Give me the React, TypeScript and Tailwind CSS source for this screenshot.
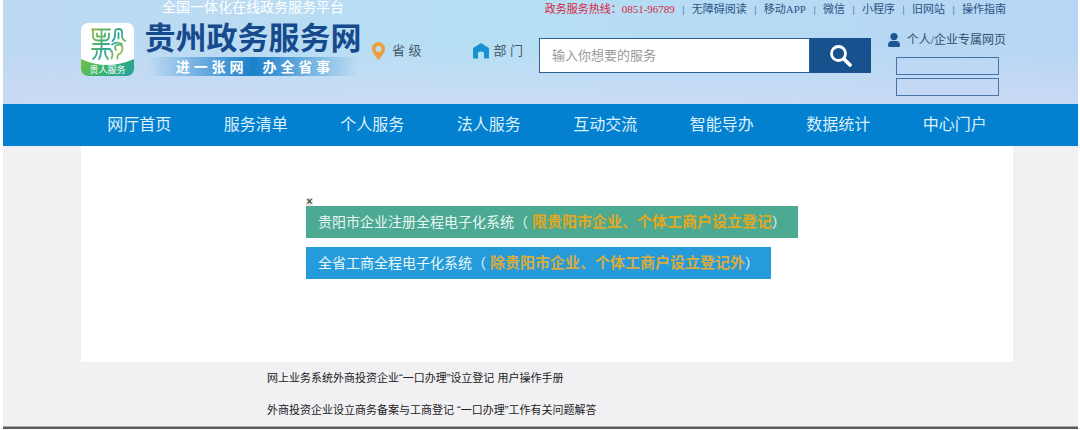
import React from 'react';

const topLinks = ['无障碍阅读', '移动APP', '微信', '小程序', '旧网站', '操作指南'];

const navItems = [
  '网厅首页',
  '服务清单',
  '个人服务',
  '法人服务',
  '互动交流',
  '智能导办',
  '数据统计',
  '中心门户',
];

const guides = [
  '网上业务系统外商投资企业“一口办理”设立登记 用户操作手册',
  '外商投资企业设立商务备案与工商登记 “一口办理”工作有关问题解答',
];

const Logo = () => (
  <svg viewBox="0 0 53 53" className="h-[53px] w-[53px] shrink-0" role="img" aria-label="贵人服务">
    <defs>
      <linearGradient id="logoBase" x1="0" y1="0" x2="1" y2="0.3">
        <stop offset="0" stopColor="#79c143" />
        <stop offset="0.5" stopColor="#3fb56c" />
        <stop offset="1" stopColor="#27a890" />
      </linearGradient>
      <linearGradient id="logoStroke" gradientUnits="userSpaceOnUse" x1="8" y1="6" x2="46" y2="36">
        <stop offset="0" stopColor="#b3b93c" />
        <stop offset="0.3" stopColor="#55b46a" />
        <stop offset="0.55" stopColor="#2fa7a0" />
        <stop offset="0.8" stopColor="#8fbf45" />
        <stop offset="1" stopColor="#4fb36b" />
      </linearGradient>
      <clipPath id="logoClip">
        <rect width="53" height="53" rx="7" />
      </clipPath>
    </defs>
    <g clipPath="url(#logoClip)">
      <rect width="53" height="53" fill="#fff" />
      <path d="M0 36Q26 48 53 36V53H0Z" fill="url(#logoBase)" />
      <g fill="none" stroke="url(#logoStroke)" strokeWidth="1.8" strokeLinecap="round" strokeLinejoin="round">
        <path d="M11 6.500H29" />
        <path d="M12 6.500V13Q12 17.500 17 17.500H24Q28 17.500 28 13V10.500" />
        <path d="M16 10.500V13.500H19M24 10.500V13.500H22" />
        <path d="M20.500 6.500V28" />
        <path d="M12 21H28M11 26H29" />
        <path d="M16 28Q16 33 12 36M20 28Q20 33 18 36M24 28Q24 33 27 36" />
        <path d="M31.500 18Q34 16 34 12V9Q34 6 37.500 6Q41 6 41 9V12Q41 17 44.500 18" />
        <path d="M37.500 10V15.500M31 21.500Q36 18 41 21" />
        <path d="M35 27Q32.500 23.500 36 22Q42 20.500 41.500 26Q41 30 37.500 31.500Q36 33 36.500 35.500" />
        <path d="M29.500 27Q33 30 30.500 35.500" />
      </g>
    </g>
    <text x="26.500" y="49.500" textAnchor="middle" fontSize="9" fill="#fff" fontFamily="'Liberation Sans','Noto Sans CJK SC',sans-serif">
      贵人服务
    </text>
  </svg>
);

const PinIcon = () => (
  <svg viewBox="0 0 13 18" className="h-[18px] w-[13px]" aria-hidden="true">
    <path
      fillRule="evenodd"
      fill="#ee9e3c"
      d="M6.500 0A6.500 6.500 0 0 1 13 6.700C13 10.500 10 13 8.200 16.200L6.500 18L4.800 16.200C3 13 0 10.500 0 6.700A6.500 6.500 0 0 1 6.500 0ZM6.500 4A3 3 0 1 0 6.500 10A3 3 0 1 0 6.500 4Z"
    />
  </svg>
);

const HouseIcon = () => (
  <svg viewBox="0 0 16 16" className="h-4 w-4" aria-hidden="true">
    <path
      fill="#1792d0"
      d="M8 0L15.500 4.800Q16 5.200 16 6V15.500H11V10.500Q11 8.500 8 8.500Q5 8.500 5 10.500V15.500H0V6Q0 5.200 0.500 4.800Z"
    />
  </svg>
);

const UserIcon = () => (
  <svg viewBox="0 0 12 14" className="h-[14px] w-3" aria-hidden="true">
    <circle cx="6" cy="3.600" r="3.600" fill="#1d5591" />
    <path fill="#1d5591" d="M0 12.500Q0 8 3.500 8H8.500Q12 8 12 12.500Q12 14 10.500 14H1.500Q0 14 0 12.500Z" />
  </svg>
);

const SearchIcon = () => (
  <svg viewBox="0 0 22 22" className="h-[22px] w-[22px]" fill="none" stroke="#fff" aria-hidden="true">
    <circle cx="8.500" cy="8.500" r="7" strokeWidth="2.800" />
    <path d="M14 14L20 20" strokeWidth="3.800" strokeLinecap="round" />
  </svg>
);

const Header = () => (
  <header className="flex bg-[linear-gradient(to_bottom,transparent_45%,#d2dbf5b0),linear-gradient(to_right,#bdd8f2,#b6dff4_45%,#b7d5f4)] pl-[78px] pr-[72px]">
    <div className="flex pt-[23px]">
      <Logo />
    </div>
    <div className="ml-[10px] w-[218px] shrink-0">
      <p className="text-center text-sm leading-[14px] text-white">全国一体化在线政务服务平台</p>
      <h1 className="mt-[7px] whitespace-nowrap text-center text-[31px] font-bold leading-9 text-[#174a8c]">贵州政务服务网</h1>
      <p className="flex h-[19px] items-center justify-center gap-[19px] bg-linear-to-r from-transparent from-2% via-[#1a80cb] via-50% to-transparent to-98% text-sm font-bold leading-none text-white">
        <span>进 一 张 网</span>
        <span>办 全 省 事</span>
      </p>
    </div>

    <div className="ml-[10px] mt-[43px] flex h-4 flex-1 items-center justify-between pr-4 text-[13px] text-[#47596b]">
      <a href="#province" className="flex items-center gap-[7px]">
        <PinIcon />
        省 级
      </a>
      <a href="#department" className="flex items-center gap-1">
        <HouseIcon />
        部 门
      </a>
    </div>

    <div className="w-[467px] shrink-0">
      <div className="flex h-[18px] items-center justify-end font-['Liberation_Serif','Noto_Sans_CJK_SC',serif] text-[11px] text-[#2a5583]">
        <span className="text-[#d7263f]">政务服务热线：0851-96789</span>
        {topLinks.map((link) => (
          <React.Fragment key={link}>
            <span className="w-[17px] text-center">|</span>
            <a href="#top">{link}</a>
          </React.Fragment>
        ))}
      </div>

      <div className="flex justify-between">
        <form className="mt-5 flex h-[35px] w-[332px]" onSubmit={(e) => e.preventDefault()}>
          <input
            type="text"
            aria-label="搜索服务"
            placeholder="输入你想要的服务"
            className="min-w-0 flex-1 border border-[#2d5f94] bg-white px-3 text-[13px] placeholder:text-[#999]"
          />
          <button type="submit" aria-label="搜索" className="flex w-[61px] items-center justify-center bg-[#17528f]">
            <SearchIcon />
          </button>
        </form>

        <div className="mt-3 pb-2">
          <a
            href="#account"
            className="flex h-5 items-center gap-[7px] font-['Liberation_Serif','Noto_Sans_CJK_SC',serif] text-xs text-[#36516e]"
          >
            <UserIcon />
            个人/企业专属网页
          </a>
          <div className="ml-2 mt-[7px] flex flex-col gap-[3px]">
            <button type="button" aria-label="个人登录" className="h-[18px] w-[103px] border border-[#4672aa]" />
            <button type="button" aria-label="企业登录" className="h-[18px] w-[103px] border border-[#4672aa]" />
          </div>
        </div>
      </div>
    </div>
  </header>
);

const Navigation = () => (
  <nav className="grid h-[42px] grid-cols-8 items-center bg-[#0480d1] pl-[78px] pr-[65px] text-center text-base text-[#dcf1fb]">
    {navItems.map((item) => (
      <a key={item} href="#nav">
        {item}
      </a>
    ))}
  </nav>
);

const App = () => {
  return (
    <div className="bg-white pl-[3px] pr-[2px] font-['Liberation_Sans','Noto_Sans_CJK_SC',sans-serif]">
      <Header />
      <Navigation />

      <main className="bg-[#f1f0f3]">
        <section className="ml-[78px] mr-[65px] flex flex-col items-start bg-white pb-[83px] pl-[225px] pt-[52px] text-sm text-[#e9f7f5]">
          <button type="button" aria-label="关闭" className="flex h-2 w-[7px] items-center justify-center bg-[#eee6dc] text-[10px] font-bold leading-none text-[#444]">
            ×
          </button>
          <a href="#guiyang" className="flex h-8 items-center bg-[#4ca992] px-3">
            <span>贵阳市企业注册全程电子化系统（</span>
            <strong className="ml-1 text-[15px] text-[#e2a820]">限贵阳市企业、个体工商户设立登记</strong>
            <span>）</span>
          </a>
          <a href="#guizhou" className="mt-[9px] flex h-8 items-center bg-[#259bdc] px-3">
            <span>全省工商全程电子化系统（</span>
            <strong className="ml-1 text-[15px] text-[#d9ac3c]">除贵阳市企业、个体工商户设立登记外</strong>
            <span>）</span>
          </a>
        </section>

        <ul className="flex flex-col gap-4 pb-2 pl-[264px] pt-2 text-[11px] leading-4 text-[#222]">
          {guides.map((guide) => (
            <li key={guide}>
              <a href="#guide">{guide}</a>
            </li>
          ))}
        </ul>
      </main>
      <div className="h-[3px] border-t border-[#aaa] bg-[#5b595c]" />
    </div>
  );
};

export default App;
